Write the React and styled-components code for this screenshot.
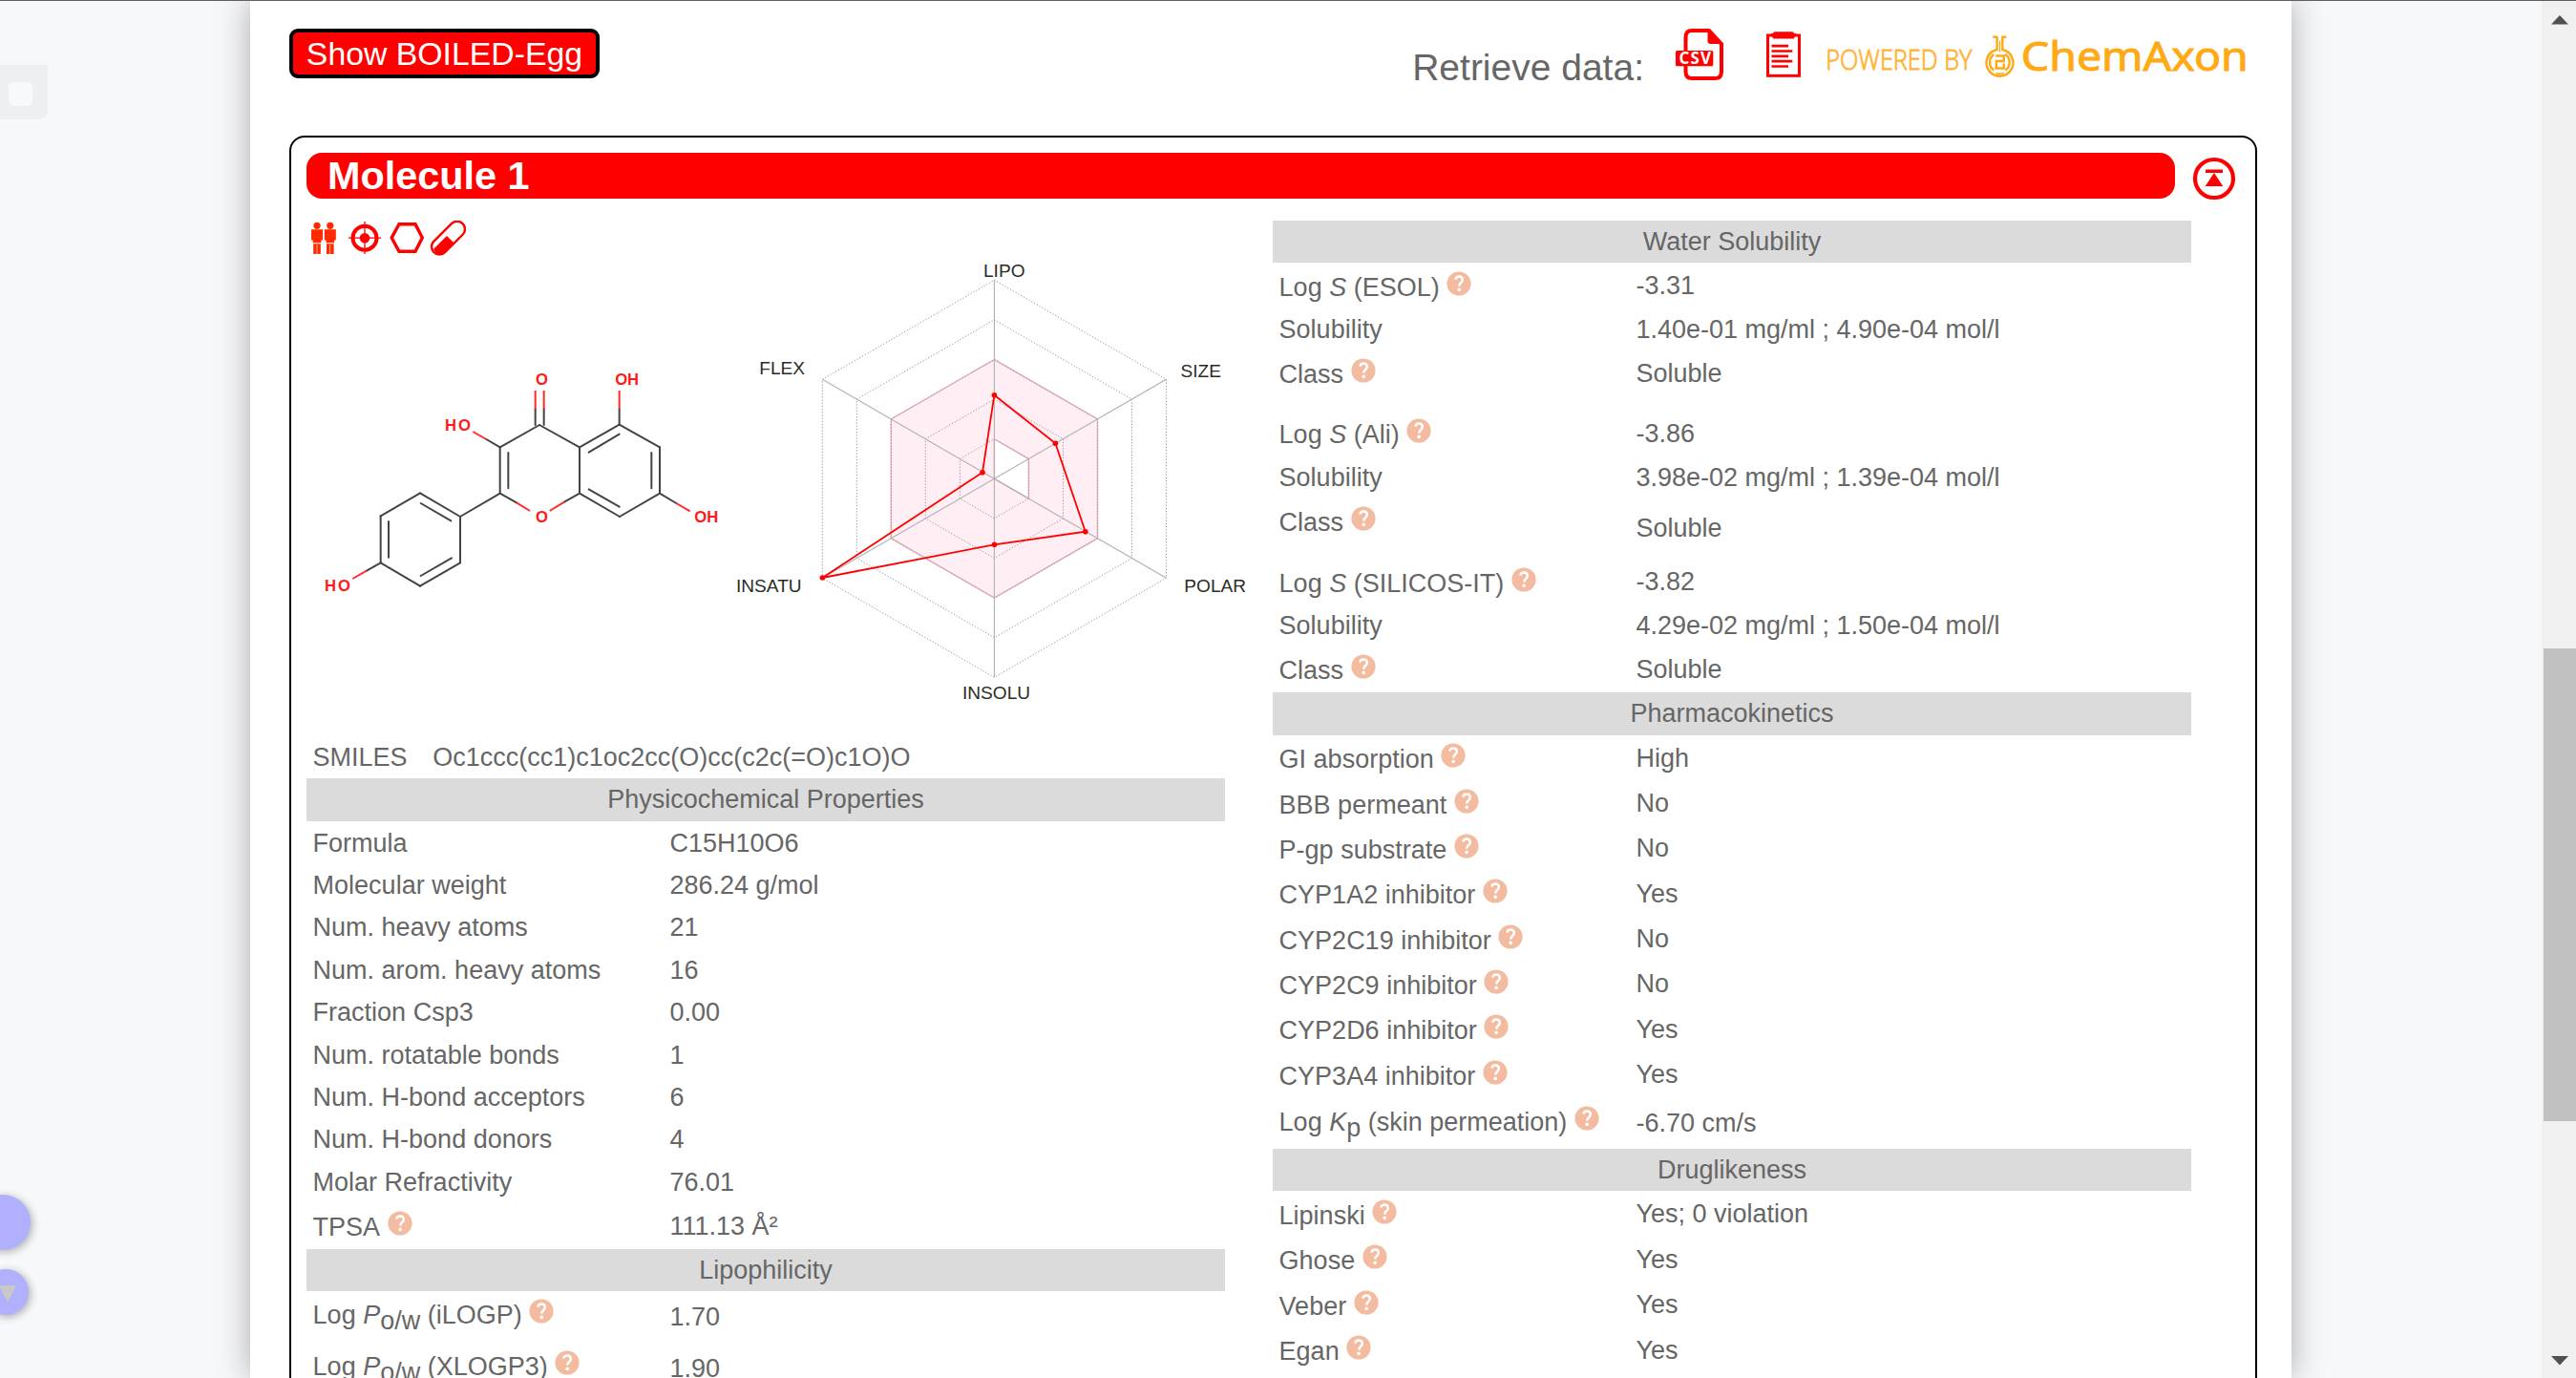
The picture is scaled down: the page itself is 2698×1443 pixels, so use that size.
import React from "react";
import styled, { createGlobalStyle, css } from "styled-components";

const RED = "#ff0000";

const GlobalStyle = createGlobalStyle`
  html, body { margin: 0; padding: 0; overflow: hidden; }
  body {
    background: #f7f8fa;
    color: #666666;
    font-family: "Liberation Sans", Arial, sans-serif;
    font-size: 27px;
  }
  * { box-sizing: border-box; }
`;

const Screen = styled.div`
  position: relative;
  display: flex;
  height: 1443px;
  width: 100%;
  overflow: hidden;
  border-top: 1px solid #625e63;
`;

const Page = styled.main`
  width: 2138px;
  margin-left: 262px;
  flex: none;
  padding: 0 36px 0 41px;
  background: #ffffff;
  box-shadow: 0 0 32px #aaaaaa;
`;

const TopBar = styled.header`
  display: flex;
  justify-content: space-between;
  align-items: flex-start;
  height: 141px;
  padding-top: 29px;
`;

const EggButton = styled.button`
  width: 325px;
  height: 52px;
  padding: 0;
  border: 4px solid #000000;
  border-radius: 9px;
  background: ${RED};
  color: #ffffff;
  font: 33.8px/42px "Liberation Sans", Arial, sans-serif;
`;

const Retrieve = styled.div`
  display: flex;
  align-items: flex-start;
  height: 60px;
  padding-right: 8px;
`;

const RetrieveLabel = styled.span`
  font-size: 39px;
  line-height: 44px;
  padding-top: 19px;
  margin-right: 33px;
  white-space: nowrap;
`;

const Card = styled.section`
  width: 2061px;
  height: 1500px;
  border: 2px solid #000000;
  border-radius: 16px;
  padding: 16px;
`;

const CardHead = styled.div`
  display: flex;
  height: 48px;
  gap: 18px;
  margin-bottom: 23px;
`;

const Title = styled.h1`
  width: 1957px;
  height: 48px;
  margin: 0;
  padding-left: 22px;
  border-radius: 16px;
  background: ${RED};
  color: #ffffff;
  font-size: 41.4px;
  font-weight: bold;
  line-height: 48px;
`;

const TopLink = styled.svg`
  width: 46px;
  height: 46px;
  margin-top: 4px;
  flex: none;
`;

const Columns = styled.div`
  display: grid;
  grid-template-columns: 1012px 962px;
`;

const Column = styled.div`
  display: flex;
  flex-direction: column;
`;

const IconRow = styled.div`
  display: flex;
  height: 36px;
  padding-left: 4px;
`;

const Figures = styled.div`
  display: flex;
  height: 504px;
`;

const MoleculeSvg = styled.svg`
  width: 449px;
  height: 280px;
  margin-top: 93px;
  flex: none;
`;

const RadarSvg = styled.svg`
  width: 540px;
  height: 504px;
  flex: none;
`;

const Smiles = styled.div`
  display: flex;
  gap: 26.6px;
  height: 44px;
  padding-left: 6.6px;
  line-height: 45px;
`;

const Band = styled.h2`
  width: 962px;
  height: ${(p) => p.$h || 44}px;
  margin: 0;
  background: #dbdbdb;
  font-size: 27px;
  font-weight: normal;
  line-height: 44px;
  text-align: center;
`;

const Row = styled.div`
  display: grid;
  grid-template-columns: 380.4px 1fr;
  width: 962px;
  height: ${(p) => p.$h}px;
  line-height: 44px;
  white-space: nowrap;
`;

const cell = css`
  padding-top: ${(p) => p.$drop || 0}px;
`;
const Label = styled.div`
  ${cell}
  height: 50px;
  padding-left: 6.6px;
`;
const Value = styled.div`
  ${cell}
`;

const Sub = styled.span`
  position: relative;
  top: 6px;
`;

const HelpSvg = styled.svg`
  width: 26px;
  height: 26px;
  margin-left: 7.4px;
  vertical-align: 0;
`;

const Scrollbar = styled.aside`
  display: flex;
  flex-direction: column;
  align-items: flex-end;
  width: 36px;
  margin-left: auto;
  background: #f0f0f0;
`;

const Arrow = styled.svg`
  width: 36px;
  height: 36px;
  flex: none;
`;

const Thumb = styled.div`
  width: 34px;
  height: 495px;
  margin-top: 642px;
  margin-bottom: 233px;
  background: #c1c1c1;
`;

const SideTab = styled.div`
  position: absolute;
  left: 0;
  top: 67px;
  width: 50px;
  height: 57px;
  padding: 18px 0 0 9px;
  border-radius: 0 0 9px 0;
  background: #eeeff0;
`;

const SideTabMark = styled.div`
  width: 25px;
  height: 25px;
  border-radius: 5px;
  background: #f8f9fb;
`;

const Bubble = styled.div`
  position: absolute;
  left: ${(p) => p.$left}px;
  top: ${(p) => p.$top}px;
  width: ${(p) => p.$size}px;
  height: ${(p) => p.$size}px;
  border-radius: 50%;
  background: #b0b0fc;
  box-shadow: 2px 2px 8px rgba(0, 0, 0, 0.3);
`;

const BubbleArrow = styled.svg`
  display: block;
  width: 18px;
  height: 18px;
  margin: 17px 0 0 17px;
`;

const Plain = styled.svg`
  display: block;
  flex: none;
  margin-left: ${(p) => p.$ml || 0}px;
  margin-top: ${(p) => p.$mt || 0}px;
`;

function Help() {
  return (
    <HelpSvg viewBox="0 0 26 26">
      <circle cx="13" cy="13" r="12.6" fill="#f3bba0" />
      <path d="M9.4 8.6 Q9.8 5.6 13.1 5.6 Q16.8 5.7 16.8 9 Q16.8 10.9 14.9 12.3 Q13.4 13.4 13.3 15.6" fill="none" stroke="#fff" strokeWidth="2.5" />
      <circle cx="13.2" cy="19.4" r="1.8" fill="#fff" />
    </HelpSvg>
  );
}

function CsvIcon() {
  return (
    <Plain width="50" height="54" viewBox="0 0 50 54">
      <path d="M10.5 24V9Q10.5 2 17 2H35L48 16V45Q48 52 41.5 52H17Q10.5 52 10.5 45V38" fill="none" stroke={RED} strokeWidth="4" />
      <path d="M33.5 1H36L49 16H37Q33.5 16 33.5 13Z" fill={RED} />
      <rect x="0" y="23" width="39.3" height="16.3" rx="1.5" fill={RED} />
      <text x="3.5" y="37" fontFamily="Open Sans" fontWeight="bold" fontSize="17" fill="#fff" textLength="33.5" lengthAdjust="spacing">CSV</text>
    </Plain>
  );
}

function ClipboardIcon() {
  return (
    <Plain $ml={45} $mt={3} width="36" height="48" viewBox="0 0 36 48">
      <rect x="1.5" y="4" width="33" height="42.3" fill="none" stroke={RED} strokeWidth="3" />
      <path d="M5 2H7Q7 0.3 9 0.3H27Q29 0.3 29 2H31V5Q29 5 29 7.5H7Q7 5 5 5Z" fill={RED} />
      <path d="M5.5 15.2H23M5.5 20.5H27.3M5.5 25.8H23M5.5 31.2H27.3M5.5 36.500H23" stroke={RED} strokeWidth="2.7" />
    </Plain>
  );
}

function ChemAxonLogo() {
  return (
    <Plain $ml={26} $mt={3} width="444" height="52" viewBox="1911.7 32.500 444 52">
      <text x="1912" y="72.500" fontFamily="Open Sans" fontWeight="300" fontSize="28.500" fill="#ffb43a" stroke="#ffb43a" strokeWidth="0.900" textLength="153" lengthAdjust="spacingAndGlyphs">POWERED BY</text>
      <g fill="none" stroke="#ffa914" strokeWidth="2.400">
        <path d="M2087 38.300H2092M2096 38.300H2101M2091.300 38V51.500A14 14 0 1 0 2097 51.500V38" />
        <path d="M2094.200 42V54" strokeWidth="1.200" />
        <path d="M2088 73A10 10 0 0 1 2088 56.500M2100 56.500A10 10 0 0 1 2100 73" />
        <path d="M2090 58H2098.500V63.500H2090.500V71H2098.500V66" />
        <path d="M2090 76Q2094 77.500 2098.500 76" strokeWidth="1.500" />
      </g>
      <text x="2116.500" y="73.500" fontFamily="Noto Sans" fontWeight="400" fontSize="41" fill="#ffa914" stroke="#ffa914" strokeWidth="0.900" textLength="238" lengthAdjust="spacingAndGlyphs">ChemAxon</text>
    </Plain>
  );
}

function Person({ x }) {
  return (
    <g transform={`translate(${x} 0)`} fill="#ff2a00">
      <circle cx="6" cy="5.300" r="3.600" />
      <path d="M0 9.300H12V20.500H10.300V23.300H1.700V20.500H0Z" />
      <path d="M2.200 24.300H9.800V35H6.300V25H5.700V35H2.200Z" />
    </g>
  );
}

function FeatureIcons() {
  return (
    <IconRow>
      <Plain width="30" height="36" viewBox="0 0 30 36">
        <Person x={1} />
        <Person x={14.8} />
      </Plain>
      <Plain $ml={9} width="36" height="36" viewBox="0 0 36 36" fill="none" stroke={RED}>
        <circle cx="18" cy="18.200" r="12.500" strokeWidth="4" />
        <circle cx="18" cy="18.200" r="5.300" fill={RED} stroke="none" />
        <path d="M18 1V35M1 18.200H35" strokeWidth="1.300" />
      </Plain>
      <Plain $ml={7} width="38" height="36" viewBox="0 0 38 36">
        <path d="M11 3.800H28L35.300 18L28 32.200H11L3.200 18Z" fill="none" stroke={RED} strokeWidth="3.400" />
      </Plain>
      <Plain $ml={5} width="38" height="38" viewBox="0 0 38 38">
        <g transform="rotate(-45 19.500 18.200)">
          <rect x="-1.800" y="10" width="42.600" height="16.400" rx="8.200" fill="none" stroke={RED} strokeWidth="2.400" />
          <path d="M0.500 15.500H20V26H6.500A8 8 0 0 1 -1 20Z" fill={RED} />
        </g>
      </Plain>
    </IconRow>
  );
}

const bonds = [
  [735, 255, 611, 325], [735, 255, 861, 325], [611, 325, 611, 470], [637, 342, 637, 454],
  [861, 325, 861, 470], [861, 325, 986, 254], [890, 341, 986, 284], [986, 254, 1113, 325],
  [1113, 325, 1113, 470], [1087, 342, 1087, 454], [1113, 470, 987, 543], [861, 470, 987, 543],
  [890, 457, 986, 512], [611, 470, 486, 543], [486, 543, 360, 469], [457, 556, 362, 501],
  [360, 469, 236, 541], [236, 541, 236, 688], [261, 558, 261, 671], [236, 688, 360, 761],
  [360, 761, 486, 688], [362, 729, 459, 673], [486, 688, 486, 543],
  [722, 205, 722, 255], [749, 205, 749, 255], [986, 205, 986, 254], [568, 300, 611, 325],
  [611, 470, 663, 499], [861, 470, 813, 497], [1113, 470, 1165, 501], [236, 688, 192, 713],
];
const heteroBonds = [
  [722, 147, 722, 205], [749, 147, 749, 205], [986, 147, 986, 205], [526, 276, 568, 300],
  [663, 499, 705, 525], [813, 497, 767, 525], [1165, 501, 1208, 526], [192, 713, 148, 738],
];
const atoms = [
  ["O", "723", 130], ["OH", "973 1011", 130], ["HO", "438 480", 272],
  ["O", "723", 562], ["OH", "1222 1261", 562], ["HO", "60 102", 778],
];

function Molecule() {
  const line = (b, i) => <line key={i} x1={b[0]} y1={b[1]} x2={b[2]} y2={b[3]} />;
  return (
    <MoleculeSvg viewBox="3 0 1347 840">
      <g stroke="#444444" strokeWidth="6" strokeLinecap="round">{bonds.map(line)}</g>
      <g stroke="#ff2a2a" strokeWidth="6">{heteroBonds.map(line)}</g>
      <g fill="#ff1a1a" fontFamily="Liberation Sans" fontWeight="bold" fontSize="50">
        {atoms.map(([t, x, y], i) => <text key={i} x={x} y={y}>{t}</text>)}
      </g>
    </MoleculeSvg>
  );
}

const CX = 1041.4;
const CY = 501.3;
const hexPoint = (r, k) => {
  const a = (Math.PI / 3) * k - Math.PI / 2;
  return `${(CX + r * Math.cos(a)).toFixed(1)},${(CY + r * Math.sin(a)).toFixed(1)}`;
};
const hexagon = (r) => [0, 1, 2, 3, 4, 5].map((k) => hexPoint(r, k)).join(" ");
const profile = [[1041.4, 413.7], [1105.4, 464.3], [1136.8, 556.7], [1041.4, 570.3], [861.4, 605], [1029, 494.7]];
const axes = [
  ["LIPO", 1030, 289.5], ["SIZE", 1236.5, 395], ["POLAR", 1240.3, 620],
  ["INSOLU", 1008, 731.7], ["INSATU", 771, 620], ["FLEX", 795.3, 391.5],
];

function Radar() {
  const hole = `${CX},${CY} ${hexPoint(41.6, 0)} ${hexPoint(41.6, 1)} ${hexPoint(41.6, 2)}`;
  return (
    <RadarSvg viewBox="770 267 540 504">
      <g stroke="#ecb4c0" strokeWidth="1.5">
        <polygon points={hexagon(124.8)} fill="#ffeff4" />
        <polygon points={hole} fill="#ffffff" />
      </g>
      <g fill="none" stroke="#999999" strokeWidth="1" strokeDasharray="1.3 1.9">
        {[41.6, 83.2, 124.8, 166.4, 208].map((r) => <polygon key={r} points={hexagon(r)} />)}
      </g>
      <g stroke="#b0b0b0" strokeWidth="1.1">
        {[0, 1, 2].map((k) => <polyline key={k} points={`${hexPoint(208, k)} ${hexPoint(208, k + 3)}`} />)}
      </g>
      <polygon points={profile.map((p) => p.join(",")).join(" ")} fill="none" stroke={RED} strokeWidth="1.8" />
      {profile.map(([x, y]) => <circle key={x + y} cx={x} cy={y} r="2.8" fill={RED} />)}
      <g fill="#2c2c24" fontFamily="Liberation Sans" fontSize="19.1">
        {axes.map(([t, x, y]) => <text key={t} x={x} y={y}>{t}</text>)}
      </g>
    </RadarSvg>
  );
}

function Property({ name, value, help, h = 47.4, ld = help ? 3.6 : 1, vd = help ? 2 : 1 }) {
  return (
    <Row $h={h}>
      <Label $drop={ld}>{name}{help && <Help />}</Label>
      <Value $drop={vd}>{value}</Value>
    </Row>
  );
}

const physchem = [
  ["Formula", "C15H10O6"],
  ["Molecular weight", "286.24 g/mol"],
  ["Num. heavy atoms", "21"],
  ["Num. arom. heavy atoms", "16"],
  ["Fraction Csp3", "0.00"],
  ["Num. rotatable bonds", "1"],
  ["Num. H-bond acceptors", "6"],
  ["Num. H-bond donors", "4"],
  ["Molar Refractivity", "76.01"],
];

const solubility = [
  { method: "(ESOL)", log: "-3.31", conc: "1.40e-01 mg/ml ; 4.90e-04 mol/l", h: 63, vd: 2 },
  { method: "(Ali)", log: "-3.86", conc: "3.98e-02 mg/ml ; 1.39e-04 mol/l", h: 63.5, vd: 9.5 },
  { method: "(SILICOS-IT)", log: "-3.82", conc: "4.29e-02 mg/ml ; 1.50e-04 mol/l", h: 47.7, vd: 2 },
];

const pharmacokinetics = [
  ["GI absorption", "High"],
  ["BBB permeant", "No"],
  ["P-gp substrate", "No"],
  ["CYP1A2 inhibitor", "Yes"],
  ["CYP2C19 inhibitor", "No"],
  ["CYP2C9 inhibitor", "No"],
  ["CYP2D6 inhibitor", "Yes"],
  ["CYP3A4 inhibitor", "Yes"],
];

const druglikeness = [
  ["Lipinski", "Yes; 0 violation"],
  ["Ghose", "Yes"],
  ["Veber", "Yes"],
  ["Egan", "Yes"],
];

const LogP = ({ method }) => <>Log <i>P</i><Sub>o/w</Sub> {method}</>;

export default function App() {
  return (
    <Screen>
      <GlobalStyle />
      <Page>
        <TopBar>
          <EggButton>Show BOILED-Egg</EggButton>
          <Retrieve>
            <RetrieveLabel>Retrieve data:</RetrieveLabel>
            <CsvIcon />
            <ClipboardIcon />
            <ChemAxonLogo />
          </Retrieve>
        </TopBar>
        <Card>
          <CardHead>
            <Title>Molecule 1</Title>
            <TopLink viewBox="0 0 46 46">
              <circle cx="23" cy="23" r="20" fill="none" stroke={RED} strokeWidth="4.2" />
              <path d="M14 13.500H32V17H14ZM23 17L32.300 31H13.700Z" fill={RED} />
            </TopLink>
          </CardHead>
          <Columns>
            <Column>
              <FeatureIcons />
              <Figures>
                <Molecule />
                <Radar />
              </Figures>
              <Smiles>
                <span>SMILES</span>
                <span>Oc1ccc(cc1)c1oc2cc(O)cc(c2c(=O)c1O)O</span>
              </Smiles>
              <Band $h={45}>Physicochemical Properties</Band>
              {physchem.map(([n, v]) => <Property key={n} name={n} value={v} h={44.4} ld={0.7} vd={0.7} />)}
              <Property name="TPSA" value="111.13 Å²" help h={48.4} />
              <Band>Lipophilicity</Band>
              <Property name={<LogP method="(iLOGP)" />} value="1.70" help h={54} ld={3.5} vd={5.5} />
              <Property name={<LogP method="(XLOGP3)" />} value="1.90" help h={54} ld={3.5} vd={5.5} />
            </Column>
            <Column>
              <Band>Water Solubility</Band>
              {solubility.map((s) => (
                <React.Fragment key={s.method}>
                  <Property name={<>Log <i>S</i> {s.method}</>} value={s.log} help />
                  <Property name="Solubility" value={s.conc} h={44.4} />
                  <Property name="Class" value="Soluble" help h={s.h} vd={s.vd} />
                </React.Fragment>
              ))}
              <Band $h={45}>Pharmacokinetics</Band>
              {pharmacokinetics.map(([n, v]) => <Property key={n} name={n} value={v} help />)}
              <Property name={<>Log <i>K</i><Sub>p</Sub> (skin permeation)</>} value="-6.70 cm/s" help h={54.8} ld={4} vd={5.5} />
              <Band>Druglikeness</Band>
              {druglikeness.map(([n, v]) => <Property key={n} name={n} value={v} help />)}
            </Column>
          </Columns>
        </Card>
      </Page>
      <Scrollbar>
        <Arrow viewBox="0 0 36 36"><path d="M19 15L28 24.500H10Z" fill="#505050" /></Arrow>
        <Thumb />
        <Arrow viewBox="0 0 36 36"><path d="M10 13H28L19 22.500Z" fill="#505050" /></Arrow>
      </Scrollbar>
      <SideTab><SideTabMark /></SideTab>
      <Bubble $left={-26} $top={1250} $size={58} />
      <Bubble $left={-18} $top={1328} $size={48}>
        <BubbleArrow viewBox="0 0 18 18"><path d="M0 0H18L9 18Z" fill="#c8c8c8" /></BubbleArrow>
      </Bubble>
    </Screen>
  );
}
